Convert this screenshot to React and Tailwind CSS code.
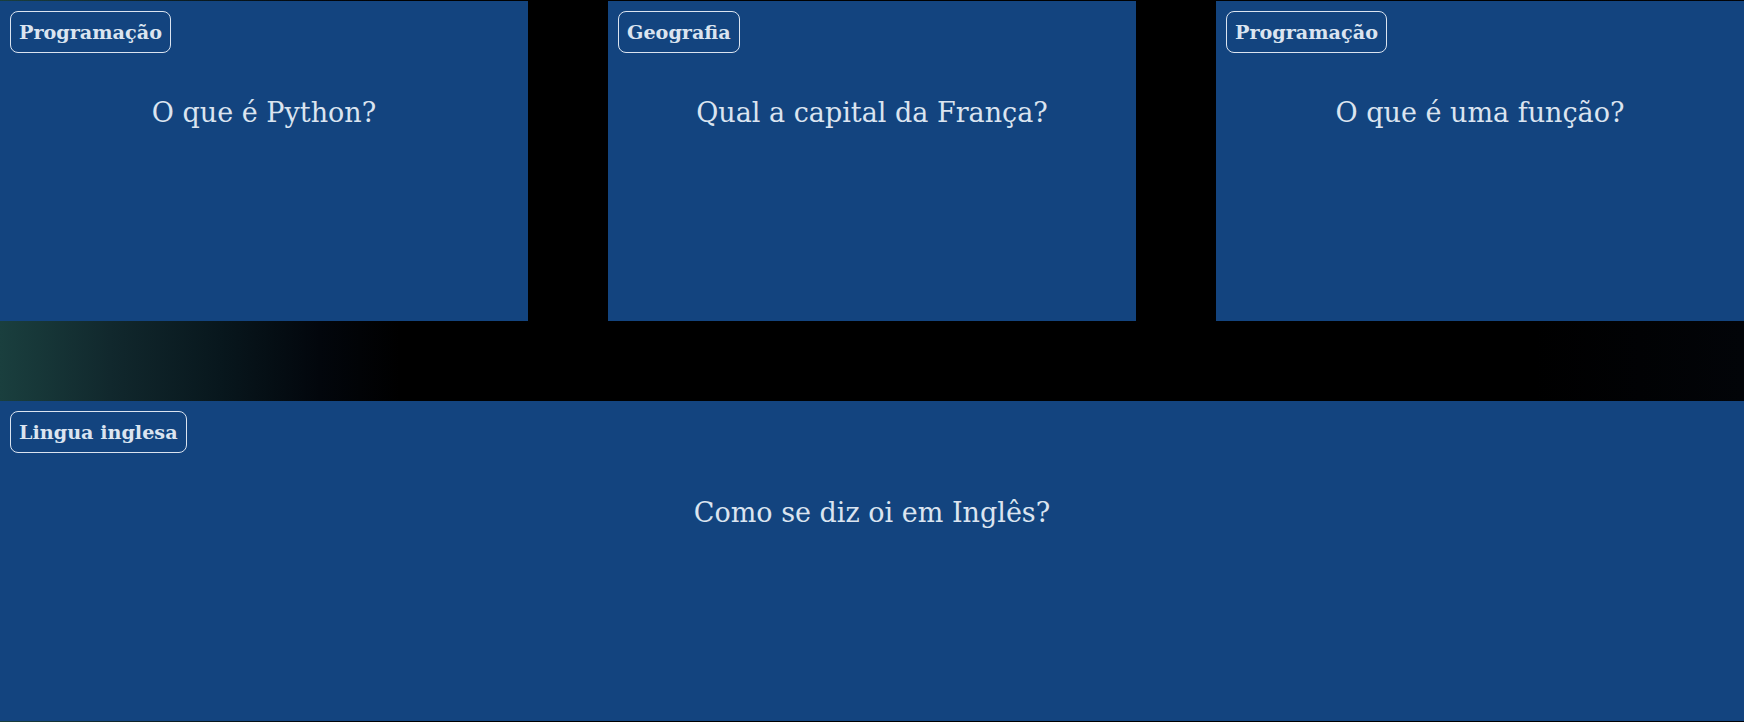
import React from 'react';

const cards = [
  { id: 1, categoria: 'Programação', pergunta: 'O que é Python?' },
  { id: 2, categoria: 'Geografia', pergunta: 'Qual a capital da França?' },
  { id: 3, categoria: 'Programação', pergunta: 'O que é uma função?' },
  { id: 4, categoria: 'Lingua inglesa', pergunta: 'Como se diz oi em Inglês?', wide: true },
];

function Card({ categoria, pergunta, wide }) {
  return (
    <div className={`bg-[#13447f] h-[320px] p-2.5 ${wide ? 'col-span-3' : ''}`}>
      <span className="inline-block border border-[#dbe4f0] rounded-lg px-2 pt-[7px] pb-[5px] text-[19.2px] font-bold text-[#dbe4f0] leading-7">
        {categoria}
      </span>
      <p className="mt-[42px] text-center text-[27px] leading-9 text-[#dbe4f0]">{pergunta}</p>
    </div>
  );
}

export default function App() {
  return (
    <div
      className="min-h-[722px] py-px bg-[linear-gradient(to_right,#1a3f3e_0px,#11282d_110px,#08171d_220px,#02060c_320px,#000_400px,#000_88%,#020408_100%)]"
      style={{ fontFamily: '"DejaVu Serif", serif' }}
    >
      <div className="grid grid-cols-3 gap-20">
        {cards.map((c) => (
          <Card key={c.id} {...c} />
        ))}
      </div>
    </div>
  );
}
